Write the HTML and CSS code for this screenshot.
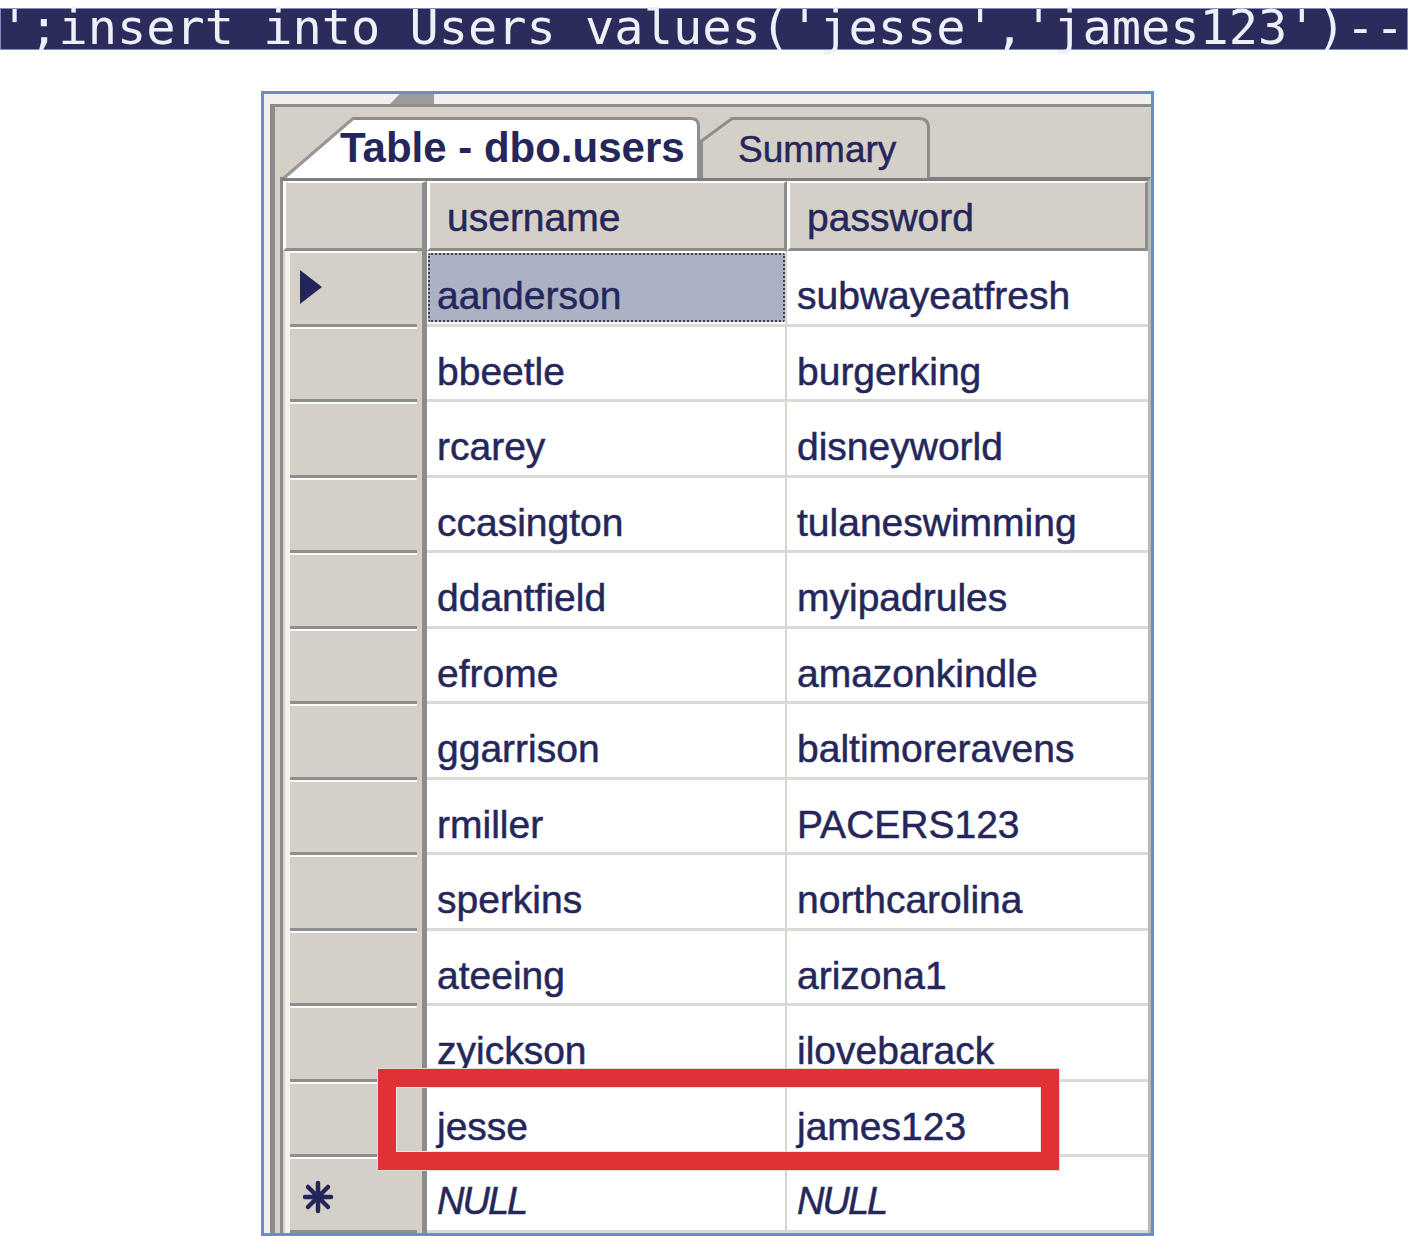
FILE: index.html
```html
<!DOCTYPE html>
<html>
<head>
<meta charset="utf-8">
<link rel="stylesheet" href="styles.css">
</head>
<body>
<div class="cmd">';insert into Users values('jesse','james123')--</div>
<div class="window">
  <div class="band"><span class="thumb"></span></div>
  <div class="pane">
    <div class="tabs">
      <div class="tab tab-active">
        <svg class="tab-shape" width="417" height="61" viewBox="0 0 417 61"><path d="M1,61 L70,1.5 L408,1.5 Q415.5,1.5 415.5,9 L415.5,61" fill="#fff" stroke="#8d8d8d" stroke-width="3"/><path d="M1,61 L70,1.5" stroke="#9a9a9a" stroke-width="2" fill="none"/></svg>
        <span class="tab-label">Table - dbo.users</span>
      </div>
      <div class="tab tab-other">
        <svg class="tab-shape" width="230" height="61" viewBox="0 0 230 61"><path d="M1.5,61 L1.5,24 L32,1.5 L219,1.5 Q228.5,1.5 228.5,11 L228.5,61" fill="#d4d0c8" stroke="#8d8d8d" stroke-width="3"/></svg>
        <span class="tab-label plain">Summary</span>
      </div>
    </div>
    <div class="grid">
      <div class="hc corner"></div>
      <div class="hc">username</div>
      <div class="hc last">password</div>

      <div class="rh"><svg class="arrow" width="24" height="36" viewBox="0 0 24 36"><path d="M1,1 L23,18 L1,35 Z" fill="#24265a"/></svg></div>
      <div class="dc u"><div class="sel">aanderson</div></div>
      <div class="dc p">subwayeatfresh</div>

      <div class="rh"></div><div class="dc u">bbeetle</div><div class="dc p">burgerking</div>
      <div class="rh"></div><div class="dc u">rcarey</div><div class="dc p">disneyworld</div>
      <div class="rh"></div><div class="dc u">ccasington</div><div class="dc p">tulaneswimming</div>
      <div class="rh"></div><div class="dc u">ddantfield</div><div class="dc p">myipadrules</div>
      <div class="rh"></div><div class="dc u">efrome</div><div class="dc p">amazonkindle</div>
      <div class="rh"></div><div class="dc u">ggarrison</div><div class="dc p">baltimoreravens</div>
      <div class="rh"></div><div class="dc u">rmiller</div><div class="dc p">PACERS123</div>
      <div class="rh"></div><div class="dc u">sperkins</div><div class="dc p">northcarolina</div>
      <div class="rh"></div><div class="dc u">ateeing</div><div class="dc p">arizona1</div>
      <div class="rh"></div><div class="dc u">zyickson</div><div class="dc p">ilovebarack</div>
      <div class="rh"></div><div class="dc u">jesse</div><div class="dc p">james123</div>

      <div class="rh"><svg class="star" width="32" height="34" viewBox="0 0 32 34"><g stroke="#24265a" stroke-width="4.5" stroke-linecap="round"><path d="M16,3 L16,31"/><path d="M3,17 L29,17"/><path d="M6,7 L26,27"/><path d="M26,7 L6,27"/></g><circle cx="16" cy="17" r="6" fill="#24265a"/></svg></div>
      <div class="dc u null">NULL</div>
      <div class="dc p null">NULL</div>
    </div>
  </div>
</div>
<div class="mark"></div>
</body>
</html>
```

FILE: styles.css
```css
body {
  margin: 0;
  background: #ffffff;
  font-family: "Liberation Sans", Arial, sans-serif;
  color: #25275a;
}

.cmd {
  margin-top: 8px;
  width: 1408px;
  height: 42px;
  box-sizing: border-box;
  background: #2b2b5c;
  box-shadow: inset 0 0 0 1px #7e8cbf;
  color: #eef0f7;
  font-family: "DejaVu Sans Mono", "Liberation Mono", monospace;
  font-size: 48.6px;
  line-height: 38px;
  white-space: pre;
  overflow: visible;
}

.window {
  margin: 41px 0 0 261px;
  width: 893px;
  height: 1145px;
  box-sizing: border-box;
  border: 3px solid #6b8dc6;
  background: #f1f0ec;
  display: flex;
  flex-direction: column;
  overflow: hidden;
}

.band {
  height: 10px;
  flex: none;
  display: flex;
}

.thumb {
  margin-left: 126px;
  width: 44px;
  height: 10px;
  background: #9c9c9c;
  clip-path: polygon(22% 0, 100% 0, 100% 100%, 0 100%);
}

.pane {
  flex: 1;
  margin-left: 6px;
  border-top: 3px solid #8c8c8c;
  border-left: 5px solid #8c8c8c;
  background: #d4d0c8;
  padding-left: 5px;
  display: flex;
  flex-direction: column;
}

.tabs {
  height: 70px;
  flex: none;
  box-sizing: border-box;
  padding: 10px 0 0 3px;
  display: flex;
  align-items: flex-end;
}

.tab {
  position: relative;
  height: 61px;
  margin-bottom: -1px;
}

.tab-active { width: 417px; z-index: 2; }
.tab-other { width: 230px; z-index: 1; }

.tab-shape {
  position: absolute;
  left: 0;
  top: 0;
}

.tab-label {
  position: relative;
  display: block;
  font-weight: bold;
  font-size: 42px;
  line-height: 42px;
  padding-top: 10px;
  padding-left: 57px;
  white-space: nowrap;
}

.tab-label.plain {
  font-weight: normal;
  font-size: 37px;
  padding-left: 38px;
  padding-top: 12px;
  -webkit-text-stroke: 0.5px #25275a;
}

.grid {
  flex: 1;
  border-left: 3px solid #8c8c8c;
  border-top: 4px solid #7f7f7f;
  border-right: 3px solid #b8b8b8;
  background: #ffffff;
  display: grid;
  grid-template-columns: 144px 360px 1fr;
  grid-template-rows: 70px repeat(13, 75.5px);
  font-size: 39px;
  line-height: 39px;
  -webkit-text-stroke: 0.5px #25275a;
}

.hc {
  background: #d4d0c8;
  border-top: 2px solid #fbfbf8;
  border-left: 3px solid #fbfbf8;
  border-right: 3px solid #8c8c8c;
  border-bottom: 3px solid #8c8c8c;
  padding: 15px 0 0 17px;
  white-space: nowrap;
}

.hc.corner { border-right-width: 5px; }

.rh {
  background:
    linear-gradient(#8e8e8e, #8e8e8e) 7px 100% / calc(100% - 12px) 3px no-repeat,
    linear-gradient(#fafaf7, #fafaf7) 7px 0 / calc(100% - 12px) 2px no-repeat,
    linear-gradient(to right, #d4d0c8 0 2px, #f3f2ee 2px 7px, #d4d0c8 7px);
  border-right: 5px solid #8c8c8c;
  display: flex;
  align-items: center;
}

.arrow { margin-left: 16px; margin-top: -4px; }
.star { margin-left: 19px; margin-top: 4px; }

.dc {
  border-bottom: 3px solid #dcdad4;
  padding: 25px 0 0 10px;
  white-space: nowrap;
}

.dc.u { border-right: 2px solid #d6d4ce; }

.dc.u:has(.sel) { padding: 2px 0 2px 1px; }

.sel {
  height: 100%;
  box-sizing: border-box;
  background: #adb1c4;
  border: 2px dotted #3f4157;
  border-radius: 2px;
  padding: 21px 0 0 7px;
}

.null {
  font-style: italic;
  font-size: 38px;
  letter-spacing: -2px;
}

.mark {
  position: absolute;
  left: 378px;
  top: 1069px;
  width: 681px;
  height: 101px;
  box-sizing: border-box;
  border: 18px solid #e03236;
  box-shadow: 0 0 0 1px #dcdcdc, inset 0 0 0 1px #e8e8e8;
}
```
